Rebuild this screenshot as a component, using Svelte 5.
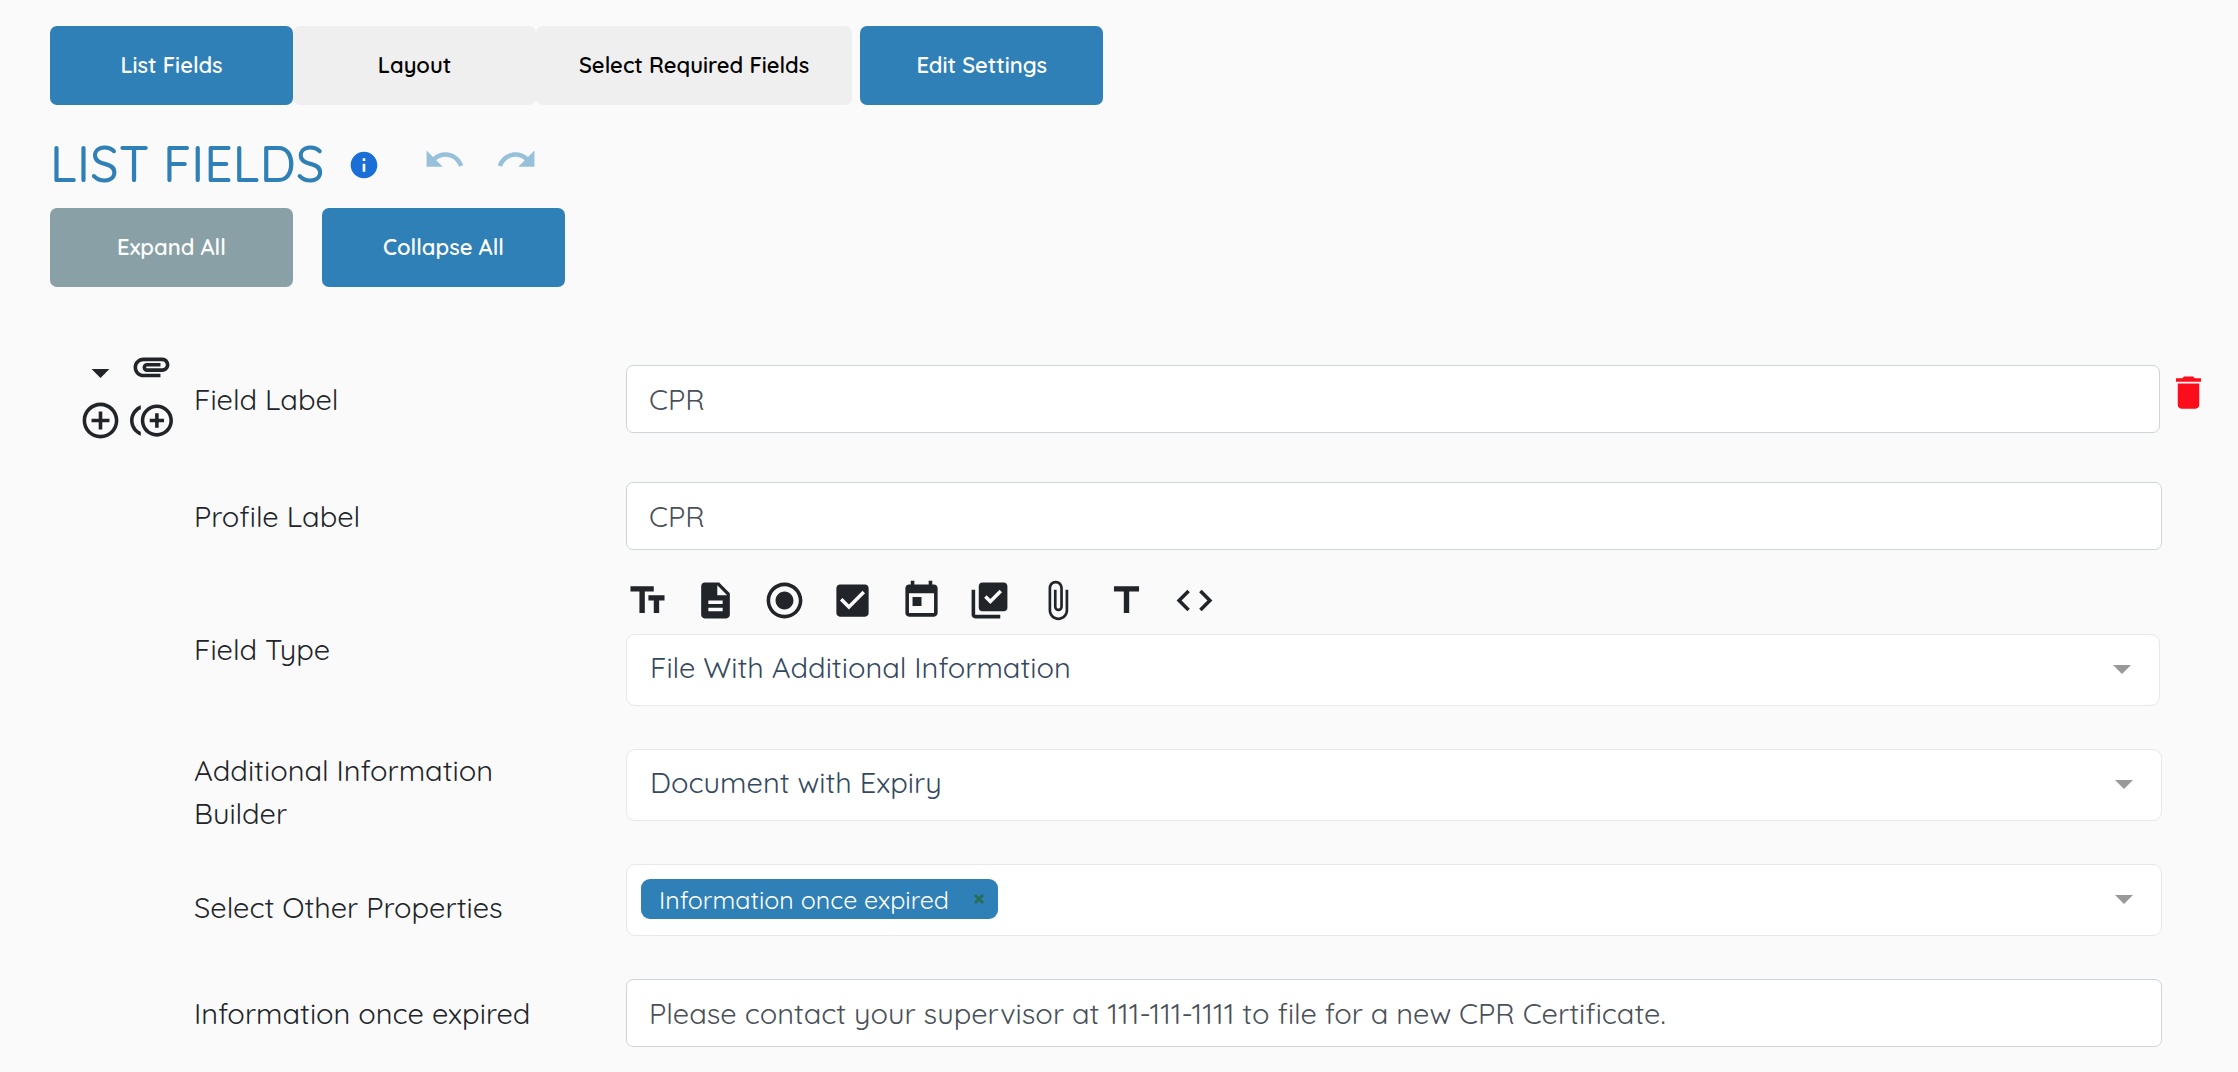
<script lang="ts">
  const tabs = ["List Fields", "Layout", "Select Required Fields"];

  // 24x24 material icons, one for each field type
  const fieldTypeIcons = [
    { name: "Text", path: "M2.5 4v3h5v12h3V7h5V4h-13zm19 5h-9v3h3v7h3v-7h3V9z" },
    {
      name: "Text area",
      path: "M14 2H6c-1.1 0-1.99.9-1.99 2L4 20c0 1.1.89 2 1.99 2H18c1.1 0 2-.9 2-2V8l-6-6zm2 16H8v-2h8v2zm0-4H8v-2h8v2zm-3-5V3.500L18.500 9H13z",
    },
    {
      name: "Radio",
      path: "M12 7c-2.760 0-5 2.240-5 5s2.240 5 5 5 5-2.240 5-5-2.240-5-5-5zm0-5C6.480 2 2 6.480 2 12s4.480 10 10 10 10-4.480 10-10S17.520 2 12 2zm0 18c-4.420 0-8-3.580-8-8s3.580-8 8-8 8 3.580 8 8-3.580 8-8 8z",
    },
    {
      name: "Checkbox",
      path: "M19 3H5c-1.110 0-2 .9-2 2v14c0 1.100.89 2 2 2h14c1.110 0 2-.9 2-2V5c0-1.100-.89-2-2-2zm-9 14l-5-5 1.410-1.410L10 14.170l7.590-7.590L19 8l-9 9z",
    },
    {
      name: "Date",
      path: "M19 3h-1V1h-2v2H8V1H6v2H5c-1.110 0-1.990.9-1.990 2L3 19c0 1.100.89 2 2 2h14c1.100 0 2-.9 2-2V5c0-1.100-.9-2-2-2zm0 16H5V8h14v11zM7 10h5v5H7z",
    },
    {
      name: "Checkbox group",
      path: "M20 2H8c-1.100 0-2 .9-2 2v12c0 1.100.9 2 2 2h12c1.100 0 2-.9 2-2V4c0-1.100-.9-2-2-2zm-7.530 12L9 10.500l1.400-1.410 2.070 2.080L17.600 6 19 7.410 12.470 14zM4 6H2v14c0 1.100.9 2 2 2h14v-2H4V6z",
    },
    {
      name: "File",
      path: "M16.500 6v11.500c0 2.210-1.790 4-4 4s-4-1.790-4-4V5c0-1.380 1.120-2.500 2.500-2.500s2.500 1.120 2.500 2.500v10.500c0 .55-.45 1-1 1s-1-.45-1-1V6H10v9.500c0 1.380 1.120 2.500 2.500 2.500s2.500-1.120 2.500-2.500V5c0-2.210-1.790-4-4-4S7 2.790 7 5v12.500c0 3.040 2.460 5.500 5.500 5.500s5.500-2.460 5.500-5.500V6h-1.500z",
    },
    { name: "Title", path: "M5 4v3h5.500v12h3V7H19V4z" },
    {
      name: "HTML",
      path: "M9.400 16.600L4.800 12l4.600-4.600L8 6l-6 6 6 6 1.400-1.400zm5.200 0l4.600-4.600-4.600-4.600L16 6l6 6-6 6-1.400-1.400z",
    },
  ];

  let activeTab = $state("List Fields");
  let expanded = $state(true);
  let fieldLabel = $state("CPR");
  let profileLabel = $state("CPR");
  let fieldType = $state("File With Additional Information");
  let builder = $state("Document with Expiry");
  let properties = $state(["Information once expired"]);
  let expiredMessage = $state(
    "Please contact your supervisor at 111-111-1111 to file for a new CPR Certificate.",
  );

  function removeProperty(property: string) {
    properties = properties.filter((p) => p !== property);
  }
</script>

{#snippet icon(path: string)}
  <svg class="icon" viewBox="0 0 24 24" aria-hidden="true"><path d={path} /></svg>
{/snippet}

<main>
  <nav class="tabs">
    {#each tabs as tab}
      <button class="btn tab" class:active={activeTab === tab} onclick={() => (activeTab = tab)}>
        {tab}
      </button>
    {/each}
    <button class="btn settings">Edit Settings</button>
  </nav>

  <header>
    <h1>LIST FIELDS</h1>
    <button class="icon-btn info" aria-label="Information">
      {@render icon(
        "M12 2C6.480 2 2 6.480 2 12s4.480 10 10 10 10-4.480 10-10S17.520 2 12 2zm1 15h-2v-6h2v6zm0-8h-2V7h2v2z",
      )}
    </button>
    <div class="history">
      <button class="icon-btn" aria-label="Undo">
        {@render icon(
          "M12.500 8c-2.650 0-5.050.99-6.900 2.600L2 7v9h9l-3.620-3.620c1.390-1.160 3.160-1.880 5.120-1.880 3.540 0 6.550 2.310 7.600 5.500l2.370-.78C21.080 11.030 17.150 8 12.500 8z",
        )}
      </button>
      <button class="icon-btn" aria-label="Redo">
        {@render icon(
          "M18.400 10.600C16.550 8.990 14.150 8 11.500 8c-4.650 0-8.580 3.030-9.960 7.220L3.900 16c1.050-3.190 4.050-5.500 7.600-5.500 1.950 0 3.730.72 5.120 1.880L13 16h9V7l-3.600 3.600z",
        )}
      </button>
    </div>
  </header>

  <div class="actions">
    <button class="btn" class:muted={expanded} onclick={() => (expanded = true)}>Expand All</button>
    <button class="btn" class:muted={!expanded} onclick={() => (expanded = false)}>
      Collapse All
    </button>
  </div>

  <form onsubmit={(e) => e.preventDefault()}>
    <div class="row narrow first">
      <div class="tools">
        <button type="button" class="icon-btn" aria-label="Toggle field">
          {@render icon("M7 10l5 5 5-5z")}
        </button>
        <button type="button" class="icon-btn top" aria-label="Attachment">
          {@render icon(
            "M2 12.500C2 9.460 4.460 7 7.500 7H18c2.210 0 4 1.790 4 4s-1.790 4-4 4H9.500C8.120 15 7 13.880 7 12.500S8.120 10 9.500 10H17v2H9.410c-.55 0-.55 1 0 1H18c1.100 0 2-.9 2-2s-.9-2-2-2H7.500C5.570 9 4 10.570 4 12.500S5.570 16 7.500 16H17v2H7.500C4.460 18 2 15.540 2 12.500z",
          )}
        </button>
        <button type="button" class="icon-btn" aria-label="Add field">
          {@render icon(
            "M13 7h-2v4H7v2h4v4h2v-4h4v-2h-4V7zm-1-5C6.480 2 2 6.480 2 12s4.480 10 10 10 10-4.480 10-10S17.520 2 12 2zm0 18c-4.410 0-8-3.590-8-8s3.590-8 8-8 8 3.590 8 8-3.590 8-8 8z",
          )}
        </button>
        <button type="button" class="icon-btn" aria-label="Duplicate field">
          {@render icon(
            "M16 8h-2v3h-3v2h3v3h2v-3h3v-2h-3zM2 12c0-2.790 1.640-5.200 4.010-6.320V3.520C2.520 4.760 0 8.090 0 12s2.520 7.240 6.010 8.480v-2.160C3.640 17.200 2 14.790 2 12zm13-9c-4.960 0-9 4.040-9 9s4.040 9 9 9 9-4.040 9-9-4.040-9-9-9zm0 16c-3.860 0-7-3.140-7-7s3.140-7 7-7 7 3.140 7 7-3.140 7-7 7z",
          )}
        </button>
      </div>
      <label for="field-label">Field Label</label>
      <input id="field-label" class="text-input" type="text" bind:value={fieldLabel} />
      <button type="button" class="icon-btn delete" aria-label="Delete field">
        {@render icon("M6 19c0 1.100.9 2 2 2h8c1.100 0 2-.9 2-2V7H6v12zM19 4h-3.500l-1-1h-5l-1 1H5v2h14V4z")}
      </button>
    </div>

    <div class="row">
      <label for="profile-label">Profile Label</label>
      <input id="profile-label" class="text-input" type="text" bind:value={profileLabel} />
    </div>

    <div class="row narrow">
      <label for="field-type">Field Type</label>
      <div class="control">
        <div class="type-icons">
          {#each fieldTypeIcons as type}
            <button type="button" class="icon-btn" aria-label={type.name}>
              {@render icon(type.path)}
            </button>
          {/each}
        </div>
        <div class="picker">
          <select id="field-type" bind:value={fieldType}>
            <option>File With Additional Information</option>
          </select>
          <span class="caret"></span>
        </div>
      </div>
    </div>

    <div class="row">
      <label for="builder">Additional Information Builder</label>
      <div class="control">
        <div class="picker">
          <select id="builder" bind:value={builder}>
            <option>Document with Expiry</option>
          </select>
          <span class="caret"></span>
        </div>
      </div>
    </div>

    <div class="row">
      <label for="properties">Select Other Properties</label>
      <div class="control">
        <div class="picker">
          {#each properties as property}
            <span class="tag">
              {property}
              <button
                type="button"
                class="remove"
                aria-label="Remove {property}"
                onclick={() => removeProperty(property)}
              >
                <svg viewBox="0 0 12 12" aria-hidden="true"><path d="M2 2l8 8M10 2l-8 8" /></svg>
              </button>
            </span>
          {/each}
          <input id="properties" class="search" type="text" />
          <span class="caret"></span>
        </div>
      </div>
    </div>

    <div class="row">
      <label for="expired-message">Information once expired</label>
      <input id="expired-message" class="text-input" type="text" bind:value={expiredMessage} />
    </div>
  </form>
</main>

<style>
  :global(body) {
    margin: 0;
    background: #fafafa;
  }

  main {
    padding: 26px 0 24px;
    font-family: Quicksand, Lato, sans-serif;
    font-size: 29px;
    font-weight: 400;
    line-height: 43px;
    color: #212529;
  }

  button,
  input,
  select {
    box-sizing: border-box;
    margin: 0;
    font: inherit;
  }

  button {
    padding: 0;
    border: none;
    background: none;
    cursor: pointer;
  }

  .tabs,
  .actions {
    display: flex;
    padding: 0 50px;
  }

  .actions {
    gap: 29px;
  }

  .btn {
    min-width: 243px;
    height: 79px;
    padding: 0 43px;
    border-radius: 7px;
    background: #2f80b7;
    color: #fff;
    font-size: 22px;
    font-weight: 600;
  }

  .tab:not(.active) {
    background: #efefef;
    color: #000;
  }

  .settings {
    margin-left: 8px;
  }

  .muted {
    background: #88a0a6;
  }

  header {
    display: flex;
    align-items: center;
    height: 90px;
    padding: 13px 50px 0;
  }

  h1 {
    margin: 0;
    color: #2f80b7;
    font-size: 50px;
    font-weight: 500;
  }

  .icon {
    display: block;
    width: 43px;
    height: 43px;
    fill: currentColor;
  }

  .icon-btn {
    color: inherit;
  }

  .info {
    margin-left: 24px;
    padding-top: 3px;
    color: #1a6fd6;
  }

  .info .icon {
    width: 32px;
    height: 32px;
  }

  .history {
    display: flex;
    gap: 29px;
    margin-left: 43px;
    padding-bottom: 7px;
    color: #97c0db;
  }

  form {
    display: flex;
    flex-direction: column;
    gap: 29px;
    margin-top: 58px;
  }

  .row {
    display: grid;
    grid-template-columns: [tools] 194px [label] 432px [control] 1fr [action] 76px;
    align-items: center;
  }

  .narrow {
    grid-template-columns: [tools] 194px [label] 432px [control] 1fr [action] 78px;
  }

  .first {
    height: 108px;
  }

  .tools {
    display: grid;
    grid-column: tools;
    grid-template-columns: 43px 43px;
    grid-template-rows: 54px 43px;
    column-gap: 8px;
    align-self: start;
    align-items: center;
    padding-left: 79px;
  }

  .top {
    align-self: start;
  }

  label {
    grid-column: label;
    padding-right: 78px;
  }

  .text-input,
  .control {
    grid-column: control;
    width: 100%;
  }

  .control {
    align-self: start;
    padding-bottom: 14px;
  }

  .text-input {
    height: 68px;
    padding: 0 22px;
    border: 1px solid #ced4da;
    border-radius: 7px;
    background: #fff;
    color: #495057;
  }

  .delete {
    grid-column: action;
    padding: 0 0 13px 7px;
    color: #fc0d1b;
  }

  .type-icons {
    display: flex;
    justify-content: space-between;
    max-width: 590px;
    margin-bottom: 12px;
  }

  .picker {
    display: flex;
    align-items: center;
    box-sizing: border-box;
    height: 72px;
    padding-bottom: 2px;
    border: 1px solid #e8e8e8;
    border-radius: 9px;
    background: #fff;
    color: #35495e;
  }

  .picker select {
    flex: 1;
    align-self: stretch;
    margin-right: -46px;
    padding: 0 46px 4px 23px;
    border: none;
    appearance: none;
    background: transparent;
    color: inherit;
  }

  .search {
    flex: 1;
    min-width: 0;
    border: none;
    background: transparent;
  }

  .caret {
    margin-right: 28px;
    border: 9px solid transparent;
    border-top-color: #999;
    border-bottom-width: 0;
    pointer-events: none;
  }

  .tag {
    display: flex;
    align-items: center;
    height: 40px;
    margin-left: 14px;
    padding-left: 18px;
    border-radius: 9px;
    background: #2f80b7;
    color: #fff;
    font-size: 25px;
  }

  .remove {
    margin-left: 11px;
    padding: 0 13px;
  }

  .remove svg {
    display: block;
    width: 12px;
    height: 12px;
    fill: none;
    stroke: #266d5a;
    stroke-width: 3;
  }
</style>
